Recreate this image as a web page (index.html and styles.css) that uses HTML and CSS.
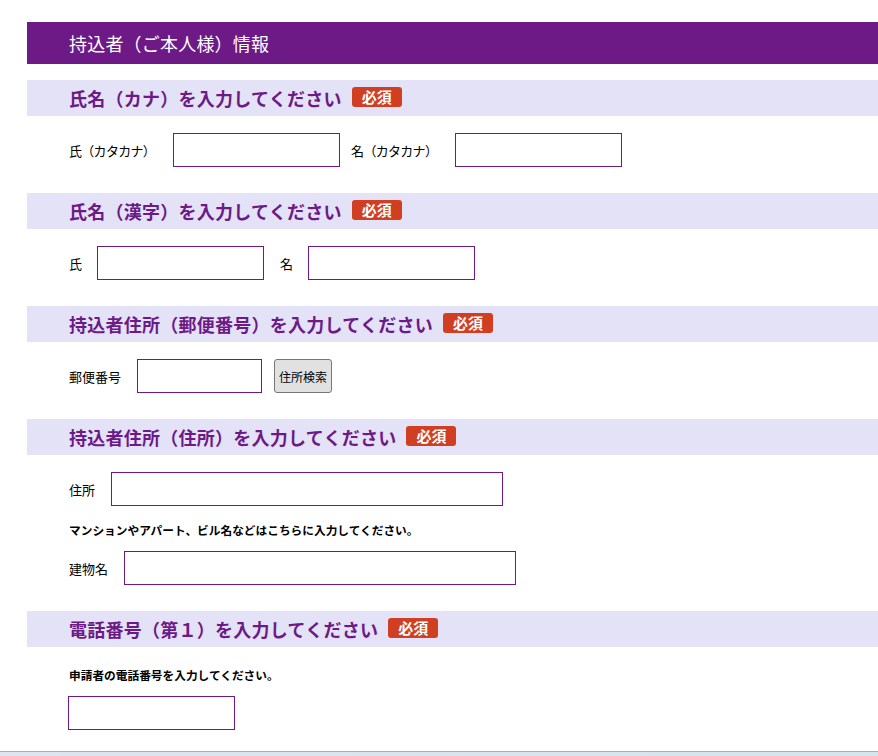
FILE: index.html
```html
<!DOCTYPE html>
<html lang="ja">
<head>
<meta charset="utf-8">
<title>持込者情報</title>
<link rel="stylesheet" href="styles.css">
</head>
<body>
<div class="page">
  <div class="main-title">持込者（ご本人様）情報</div>

  <section class="section">
    <h2 class="section-head">氏名（カナ）を入力してください<span class="badge">必須</span></h2>
    <div class="section-body">
      <div class="row row-kana">
        <label class="label">氏（カタカナ）</label><input class="field" type="text">
        <label class="label">名（カタカナ）</label><input class="field" type="text">
      </div>
    </div>
  </section>

  <section class="section">
    <h2 class="section-head">氏名（漢字）を入力してください<span class="badge">必須</span></h2>
    <div class="section-body">
      <div class="row row-kanji">
        <label class="label">氏</label><input class="field" type="text">
        <label class="label">名</label><input class="field" type="text">
      </div>
    </div>
  </section>

  <section class="section">
    <h2 class="section-head">持込者住所（郵便番号）を入力してください<span class="badge">必須</span></h2>
    <div class="section-body">
      <div class="row">
        <label class="label">郵便番号</label><input class="field field-zip" type="text"><button class="btn" type="button">住所検索</button>
      </div>
    </div>
  </section>

  <section class="section">
    <h2 class="section-head">持込者住所（住所）を入力してください<span class="badge">必須</span></h2>
    <div class="section-body">
      <div class="row">
        <label class="label">住所</label><input class="field field-wide" type="text">
      </div>
      <p class="note">マンションやアパート、ビル名などはこちらに入力してください。</p>
      <div class="row">
        <label class="label">建物名</label><input class="field field-wide" type="text">
      </div>
    </div>
  </section>

  <section class="section">
    <h2 class="section-head">電話番号（第１）を入力してください<span class="badge">必須</span></h2>
    <div class="section-body">
      <p class="note note-top">申請者の電話番号を入力してください。</p>
      <div class="row row-tel">
        <input class="field" type="text">
      </div>
    </div>
  </section>
</div>
<div class="window-edge"></div>
</body>
</html>
```

FILE: styles.css
```css
html, body {
  margin: 0;
  padding: 0;
  background: #ffffff;
}

body {
  font-family: "Noto Sans CJK JP", "Noto Sans", sans-serif;
  color: #000000;
  overflow: hidden;
}

.page {
  padding: 22px 0 0 27px;
}

.main-title {
  height: 42px;
  line-height: 42px;
  background: #6d1a87;
  color: #ffffff;
  font-size: 18px;
  letter-spacing: 0.2px;
  padding-left: 42px;
}

.section {
  margin-top: 16px;
}

.section + .section {
  margin-top: 26px;
}

.section-head {
  margin: 0;
  height: 36px;
  display: flex;
  align-items: center;
  padding-left: 42px;
  background: #e4e2f7;
  color: #6d1a87;
  font-size: 18px;
  font-weight: bold;
  letter-spacing: 0.25px;
  line-height: 1;
}

.badge {
  display: inline-flex;
  align-items: center;
  justify-content: center;
  margin-left: 10px;
  width: 50px;
  height: 20px;
  margin-top: -3px;
  background: #d13f22;
  color: #ffffff;
  font-size: 15px;
  font-weight: bold;
  letter-spacing: 0;
  border-radius: 3px;
}

.section-body {
  padding: 17px 0 0 42px;
}

.row {
  display: flex;
  align-items: center;
  height: 34px;
}

.label {
  font-size: 13px;
  margin-right: 16px;
  white-space: nowrap;
}

.field {
  box-sizing: border-box;
  width: 167px;
  height: 34px;
  margin: 0 14px 0 0;
  border: 1px solid #6d1a87;
  background: #ffffff;
  padding: 0 4px;
  font-size: 13px;
  outline: none;
}

.row-kana .label {
  letter-spacing: -0.7px;
  margin-right: 18px;
}

.row-kana .field {
  margin-right: 11px;
}

.row-kanji .label {
  margin-right: 15px;
}

.row-kanji .field {
  margin-right: 16px;
}

.field-zip {
  width: 125px;
  margin-right: 12px;
}

.field-wide {
  width: 392px;
}

.btn {
  box-sizing: border-box;
  width: 58px;
  height: 34px;
  padding: 0;
  background: #e1e1e1;
  border: 1px solid #777777;
  border-radius: 3px;
  font-family: "Noto Sans CJK JP", sans-serif;
  font-size: 12px;
  color: #000000;
}

.note {
  margin: 16px 0 13px;
  font-size: 11.7px;
  font-weight: bold;
  line-height: 16px;
}

.note-top {
  margin-top: 3px;
  margin-bottom: 13px;
}

.row-tel {
  margin-left: -1px;
}

.window-edge {
  margin-top: 21px;
  height: 6px;
  border-top: 1px solid #a9aeb4;
  background: linear-gradient(90deg, #dfe4ee, #d6e4ec);
}
```
